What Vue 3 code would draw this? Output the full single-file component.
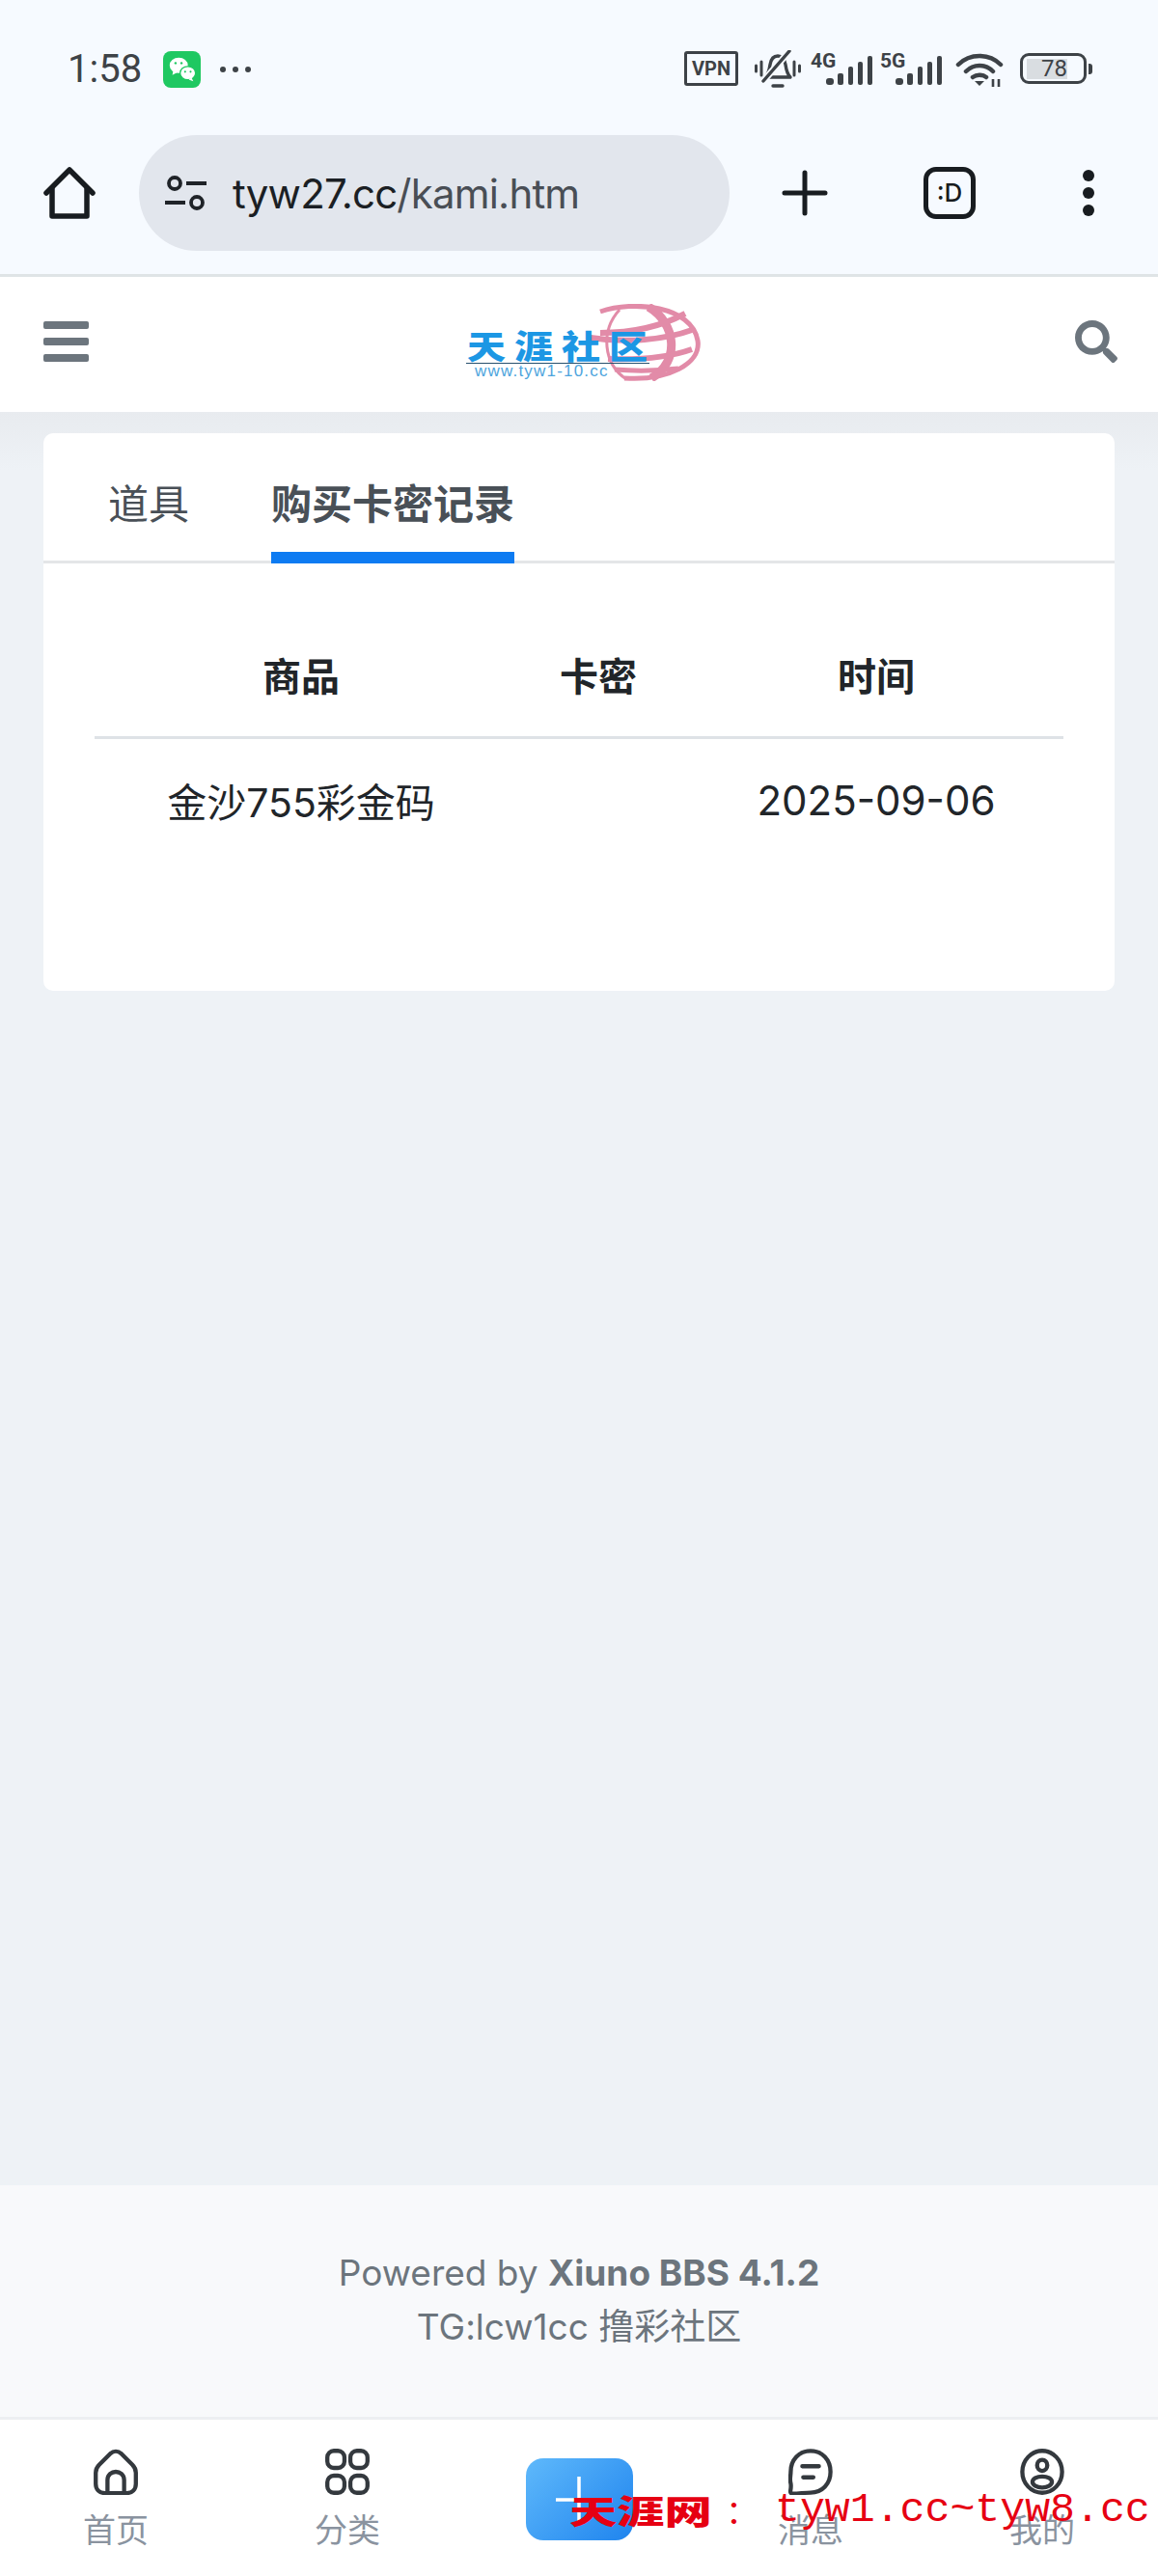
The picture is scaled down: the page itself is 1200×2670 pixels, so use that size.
<script setup>
const tabs = [
  { label: '道具', active: false },
  { label: '购买卡密记录', active: true },
]

const rows = [{ goods: '金沙755彩金码', code: '', time: '2025-09-06' }]

const navItems = [
  { label: '首页', icon: 'home' },
  { label: '分类', icon: 'grid' },
  { label: '', icon: 'add' },
  { label: '消息', icon: 'chat' },
  { label: '我的', icon: 'user' },
]

const networks = ['4G', '5G']
</script>

<template>
  <div class="screen">
    <!-- phone status bar -->
    <div class="status-bar">
      <div class="status-left">
        <span class="clock">1:58</span>
        <span class="wechat">
          <svg viewBox="0 0 36 36" width="34" height="34">
            <ellipse cx="14" cy="13.500" rx="10" ry="8.500" fill="#fff" />
            <path d="M8 19l-1 5 6-3z" fill="#fff" />
            <ellipse cx="24" cy="22" rx="8.500" ry="7.400" fill="#fff" stroke="#1fc861" stroke-width="1.400" />
            <path d="M28 27l2 4-5-2z" fill="#fff" />
            <circle cx="10.500" cy="11" r="1.300" fill="#1fc861" />
            <circle cx="17" cy="11" r="1.300" fill="#1fc861" />
            <circle cx="21" cy="20.500" r="1.100" fill="#1fc861" />
            <circle cx="27" cy="20.500" r="1.100" fill="#1fc861" />
          </svg>
        </span>
        <span class="dots"><i></i><i></i><i></i></span>
      </div>
      <div class="status-right">
        <span class="vpn">VPN</span>
        <svg class="bell" viewBox="0 0 48 40" width="48" height="40" fill="none" stroke="#3d4247" stroke-width="3.400" stroke-linecap="round">
          <path d="M11 28c3-3 4-6 5-13 1-6 4-9 8-9s7 3 8 9c1 7 2 10 5 13z" stroke-linejoin="round" />
          <path d="M36 1L9 32" stroke="#f6faff" stroke-width="7" />
          <path d="M36 1L9 32" />
          <path d="M19 37h10" />
          <path d="M1.500 16v6M7 12v14M41 12v14M46.500 16v6" stroke-width="3" />
        </svg>
        <span v-for="net in networks" :key="net" class="signal">
          <b>{{ net }}</b>
          <svg viewBox="0 0 49 30" width="49" height="30" fill="#3d4247">
            <rect x="0" y="23" width="8" height="7" rx="3" />
            <rect x="12" y="18" width="6" height="12" rx="2" />
            <rect x="23" y="11" width="5" height="19" rx="2" />
            <rect x="33" y="6" width="5" height="24" rx="2" />
            <rect x="43" y="0" width="5" height="30" rx="2" />
          </svg>
        </span>
        <svg class="wifi" viewBox="0 0 50 36" width="50" height="36" fill="none" stroke="#3d4247" stroke-width="4.500">
          <path d="M3 13C15 1 35 1 47 13" stroke-linecap="round" />
          <path d="M11 20c8-8 20-8 28 0" stroke-linecap="round" />
          <path d="M18 26c4-3 10-3 14 0" stroke-linecap="round" />
          <path d="M20 30h10l-5 5z" fill="#3d4247" stroke="none" />
          <path d="M39 36v-8M45 36v-8" stroke-width="2.600" />
        </svg>
        <span class="battery">
          <span class="battery-body"><span class="battery-level">78</span></span>
          <span class="battery-tip"></span>
        </span>
      </div>
    </div>

    <!-- browser toolbar -->
    <div class="browser-bar">
      <svg class="home-btn" viewBox="0 0 54 54" width="54" height="54" fill="none" stroke="#181c20" stroke-width="5.500" stroke-linejoin="round" stroke-linecap="round">
        <path d="M3 27L27 3l24 24" />
        <path d="M9 23v28h36V23" />
      </svg>
      <div class="omnibox">
        <svg viewBox="0 0 45 36" width="45" height="36" fill="none" stroke="#1f2328" stroke-width="3.800">
          <circle cx="11" cy="8" r="6" />
          <path d="M23 8h21M1 28h21" />
          <circle cx="34" cy="28" r="6" />
        </svg>
        <span class="url"><span class="url-host">tyw27.cc</span>/kami.htm</span>
      </div>
      <svg class="plus-btn" viewBox="0 0 48 48" width="48" height="48" stroke="#181c20" stroke-width="5" stroke-linecap="round">
        <path d="M24 3v42M3 24h42" />
      </svg>
      <span class="tab-count">:D</span>
      <span class="kebab"><i></i><i></i><i></i></span>
    </div>

    <!-- site header -->
    <header class="site-header">
      <span class="burger"><i></i><i></i><i></i></span>
      <div class="logo">
        <svg class="logo-globe" viewBox="0 0 130 80" width="130" height="80" fill="none" stroke="#e28ba8">
          <path d="M25 8C60-4 120 2 126 38c4 24-31 42-76 39" stroke-width="5" />
          <path d="M45 6C25 28 28 62 52 78" stroke-width="3" />
          <path d="M75 3c29 17 33 57 3 74" stroke-width="9" />
          <path d="M25 30c30 0 62-6 88-20" stroke-width="6" />
          <path d="M15 35c36 6 78 2 105-8" stroke-width="6" />
          <path d="M33 57c30 1 62-1 87-10" stroke-width="6" />
          <path d="M40 68c24 2 48 1 66-1" stroke-width="5" />
        </svg>
        <span class="logo-title">天涯社区</span>
        <span class="logo-rule"></span>
        <span class="logo-url">www.tyw1-10.cc</span>
      </div>
      <svg class="search" viewBox="0 0 512 512" width="44" height="44" fill="#6c757d">
        <path d="M505 442.700L405.300 343c-4.500-4.500-10.600-7-17-7H372c27.600-35.300 44-79.700 44-128C416 93.100 322.900 0 208 0S0 93.100 0 208s93.100 208 208 208c48.300 0 92.700-16.400 128-44v16.300c0 6.400 2.500 12.500 7 17l99.700 99.700c9.400 9.400 24.600 9.400 33.900 0l28.300-28.300c9.400-9.400 9.400-24.600.1-34zM208 336c-70.700 0-128-57.200-128-128 0-70.700 57.200-128 128-128 70.700 0 128 57.200 128 128 0 70.700-57.200 128-128 128z" />
      </svg>
    </header>

    <main class="content">
      <section class="card">
        <nav class="tabs">
          <a v-for="tab in tabs" :key="tab.label" class="tab" :class="{ active: tab.active }">{{ tab.label }}</a>
        </nav>
        <div class="card-body">
          <table class="records">
            <thead>
              <tr>
                <th class="col-goods">商品</th>
                <th class="col-code">卡密</th>
                <th class="col-time">时间</th>
              </tr>
            </thead>
            <tbody>
              <tr v-for="row in rows" :key="row.goods">
                <td>{{ row.goods }}</td>
                <td>{{ row.code }}</td>
                <td class="cell-time">{{ row.time }}</td>
              </tr>
            </tbody>
          </table>
        </div>
      </section>
    </main>

    <footer class="site-footer">
      <div>Powered by <b>Xiuno BBS 4.1.2</b></div>
      <div>TG:lcw1cc 撸彩社区</div>
    </footer>

    <!-- bottom tab bar -->
    <nav class="bottom-nav">
      <div v-for="item in navItems" :key="item.icon" class="nav-item">
        <svg v-if="item.icon === 'home'" viewBox="0 0 48 50" width="46" height="48" fill="none" stroke="#34393e" stroke-width="4.500" stroke-linejoin="round">
          <path d="M18 5.500c3.500-3.500 8.500-3.500 12 0l12 12c2.500 2.500 3.700 5 3.700 8.500v12c0 6-4 10-10 10H12.300c-6 0-10-4-10-10V26c0-3.500 1.200-6 3.700-8.500z" />
          <path d="M15 47V34c0-12 18-12 18 0v13" />
        </svg>
        <svg v-else-if="item.icon === 'grid'" viewBox="0 0 48 50" width="46" height="48" fill="none" stroke="#34393e" stroke-width="4.500">
          <rect x="2.300" y="2.300" width="18.500" height="18.500" rx="7" />
          <rect x="27.200" y="2.300" width="18.500" height="18.500" rx="7" />
          <rect x="2.300" y="29.200" width="18.500" height="18.500" rx="7" />
          <rect x="27.200" y="29.200" width="18.500" height="18.500" rx="7" />
        </svg>
        <div v-else-if="item.icon === 'add'" class="add-btn">
          <svg viewBox="0 0 48 48" width="48" height="48" stroke="#fff" stroke-width="3.500">
            <path d="M24 0v48M0 24h48" />
          </svg>
        </div>
        <svg v-else-if="item.icon === 'chat'" viewBox="0 0 48 50" width="46" height="48" fill="none" stroke="#34393e" stroke-width="4.500" stroke-linecap="round" stroke-linejoin="round">
          <path d="M24 2.500c12.500 0 21.500 9.500 21.500 22.500S36.500 47.500 24 47.500c-6 0-12 1-19 1.200-2 0-3-1-2.800-3 .4-3 1-5.500.2-8.700C1.200 33 2.500 29 2.500 25 2.500 12 11.500 2.500 24 2.500z" />
          <path d="M15 19h18M16 31h11" />
        </svg>
        <svg v-else-if="item.icon === 'user'" viewBox="0 0 48 50" width="46" height="48" fill="none" stroke="#34393e" stroke-width="4.500">
          <ellipse cx="24" cy="25" rx="21.500" ry="22.700" />
          <ellipse cx="24" cy="18" rx="5.500" ry="6" />
          <ellipse cx="24" cy="36" rx="10.500" ry="6" />
        </svg>
        <span v-if="item.label" class="nav-label">{{ item.label }}</span>
      </div>

      <!-- notice strip that sits over the tab bar -->
      <div class="notice">
        <span class="notice-name">天涯网</span>
        <span class="notice-colon">：</span>
        <span class="notice-links">tyw1.cc~tyw8.cc</span>
      </div>
    </nav>
  </div>
</template>

<style scoped>
.screen {
  width: 1200px;
  height: 2670px;
  display: flex;
  flex-direction: column;
  background: #eef2f6;
  font-family: "Inter", "Noto Sans CJK SC", sans-serif;
  overflow: hidden;
}

.status-bar {
  height: 140px;
  flex: none;
  box-sizing: border-box;
  padding: 50px 68px 0 70px;
  display: flex;
  justify-content: space-between;
  align-items: flex-start;
  background: #f6faff;
}

.status-left {
  display: flex;
  align-items: center;
  height: 44px;
}

.clock {
  font: 400 40px/44px "Roboto", sans-serif;
  color: #3d4247;
  width: 77px;
}

.wechat {
  width: 39px;
  height: 38px;
  margin-left: 22px;
  background: #1fc861;
  border-radius: 8px;
  display: flex;
  align-items: center;
  justify-content: center;
}

.dots {
  display: flex;
  gap: 7px;
  margin-left: 20px;
}

.dots i {
  width: 6px;
  height: 6px;
  border-radius: 50%;
  background: #3d4247;
}

.status-right {
  display: flex;
  align-items: flex-start;
}

.vpn {
  width: 50px;
  height: 30px;
  border: 3px solid #3d4247;
  border-radius: 3px;
  color: #3d4247;
  font: 700 20px/30px "Roboto", sans-serif;
  text-align: center;
  margin-top: 3px;
}

.bell {
  margin: 2px 0 0 17px;
}

.signal {
  display: flex;
  position: relative;
  width: 65px;
  height: 34px;
  margin: 4px 0 0 10px;
  align-items: flex-end;
  justify-content: flex-end;
}

.signal + .signal {
  margin-left: 7px;
}

.signal b {
  position: absolute;
  left: 0;
  top: -2px;
  font: 700 21px/22px "Roboto", sans-serif;
  color: #3d4247;
}

.wifi {
  margin: 4px 0 0 13px;
}

.battery {
  display: flex;
  align-items: center;
  margin: 5px 0 0 17px;
}

.battery-body {
  width: 42px;
  height: 21px;
  border: 3px solid #3d4247;
  border-radius: 9px;
  padding: 3px 17px 2px 4px;
  display: flex;
}

.battery-level {
  flex: 1;
  background: #d9dde1;
  color: #3d4247;
  font: 400 24px/21px "Roboto", sans-serif;
  text-align: right;
}

.battery-tip {
  width: 4px;
  height: 11px;
  margin-left: 2px;
  background: #3d4247;
  border-radius: 0 3px 3px 0;
}

.browser-bar {
  height: 147px;
  flex: none;
  box-sizing: border-box;
  display: flex;
  align-items: flex-start;
  background: #f6faff;
  border-bottom: 3px solid #dfe4e6;
}

.home-btn {
  margin: 33px 0 0 45px;
}

.omnibox {
  width: 612px;
  height: 120px;
  margin-left: 45px;
  box-sizing: border-box;
  background: #e2e6ed;
  border-radius: 60px;
  display: flex;
  align-items: center;
  padding-left: 26px;
}

.url {
  margin-left: 26px;
  font-size: 42px;
  letter-spacing: -0.8px;
  color: #494e55;
  white-space: nowrap;
}

.url-host {
  color: #1b1f24;
}

.plus-btn {
  margin: 36px 0 0 54px;
}

.tab-count {
  width: 44px;
  height: 44px;
  margin: 33px 0 0 99px;
  border: 5px solid #181c20;
  border-radius: 13px;
  color: #181c20;
  font: 500 26px/44px "Inter", sans-serif;
  text-align: center;
}

.kebab {
  display: flex;
  flex-direction: column;
  gap: 6px;
  margin: 36px 0 0 111px;
}

.kebab i {
  width: 12px;
  height: 12px;
  border-radius: 50%;
  background: #181c20;
}

.site-header {
  height: 140px;
  flex: none;
  background: #fff;
  display: flex;
  align-items: center;
  justify-content: space-between;
  padding: 0 42px 0 45px;
  position: relative;
  z-index: 1;
}

.burger {
  display: flex;
  flex-direction: column;
  gap: 9px;
  margin-bottom: 6px;
}

.burger i {
  width: 47px;
  height: 8px;
  background: #6c757d;
  border-radius: 2px;
}

.search {
  margin-bottom: 6px;
}

.logo {
  position: absolute;
  left: 483px;
  top: 30px;
  width: 244px;
  height: 78px;
}

.logo-globe {
  position: absolute;
  left: 114px;
  top: -2px;
}

.logo-title {
  position: absolute;
  left: 1px;
  top: 23px;
  font: 900 40px/36px "Noto Sans CJK SC", sans-serif;
  letter-spacing: 9px;
  color: #1c97e4;
  white-space: nowrap;
  transform: scaleY(0.85);
}

.logo-rule {
  position: absolute;
  left: 0;
  top: 59px;
  width: 190px;
  height: 1px;
  background: #27506e;
}

.logo-url {
  position: absolute;
  left: 9px;
  top: 60px;
  font: 400 17px/15px "Liberation Sans", sans-serif;
  letter-spacing: 1.200px;
  color: #4ea5dd;
}

.content {
  flex: 1;
  box-sizing: border-box;
  padding: 22px 45px 0;
  background: linear-gradient(#e8ebef, #eef2f6 60px);
}

.card {
  background: #fff;
  border-radius: 10px;
  height: 578px;
  display: flex;
  flex-direction: column;
}

.tabs {
  height: 135px;
  flex: none;
  box-sizing: border-box;
  display: flex;
  gap: 85px;
  padding-left: 67px;
  border-bottom: 3px solid #e4e6e8;
}

.tab {
  height: 135px;
  box-sizing: border-box;
  padding-top: 44px;
  font-size: 42px;
  line-height: 60px;
  color: #495057;
}

.tab.active {
  font-weight: 700;
  border-bottom: 12px solid #0d7bf2;
}

.card-body {
  padding: 51px 53px 0;
}

.records {
  width: 100%;
  border-collapse: collapse;
  table-layout: fixed;
  color: #212529;
  font-size: 41px;
}

.records th {
  height: 126px;
  font-size: 40px;
  font-weight: 700;
  text-align: center;
  border-bottom: 3px solid #dee2e6;
}

.records td {
  height: 124px;
  text-align: center;
}

.records .cell-time {
  font-size: 42px;
}

.col-goods {
  width: 426px;
}

.col-code {
  width: 186px;
}

.site-footer {
  height: 240px;
  flex: none;
  box-sizing: border-box;
  padding-top: 63px;
  background: #f8f9fb;
  color: #6c757d;
  font-size: 37px;
  line-height: 56px;
  text-align: center;
}

.bottom-nav {
  height: 165px;
  flex: none;
  box-sizing: border-box;
  border-top: 3px solid #edeff2;
  background: #fff;
  display: grid;
  grid-template-columns: repeat(5, 240px);
  position: relative;
}

.nav-item {
  display: flex;
  flex-direction: column;
  align-items: center;
  padding-top: 30px;
}

.nav-label {
  font-size: 34px;
  line-height: 44px;
  margin-top: 15px;
  color: #8a939f;
}

.add-btn {
  width: 111px;
  height: 85px;
  margin-top: 10px;
  border-radius: 18px;
  background: linear-gradient(135deg, #5fb9fb, #1f84ee);
  display: flex;
  align-items: center;
  justify-content: center;
}

.notice {
  position: absolute;
  left: 590px;
  top: 68px;
  display: flex;
  align-items: center;
  color: #e60012;
  white-space: nowrap;
}

.notice-name {
  width: 162px;
  font: 900 34px/52px "Noto Sans CJK SC", sans-serif;
  transform: scaleX(1.45);
  transform-origin: left center;
}

.notice-colon {
  width: 51px;
  font: 400 34px/52px "Noto Sans CJK SC", sans-serif;
}

.notice-links {
  font: 400 43.200px/52px "Liberation Mono", monospace;
}
</style>
